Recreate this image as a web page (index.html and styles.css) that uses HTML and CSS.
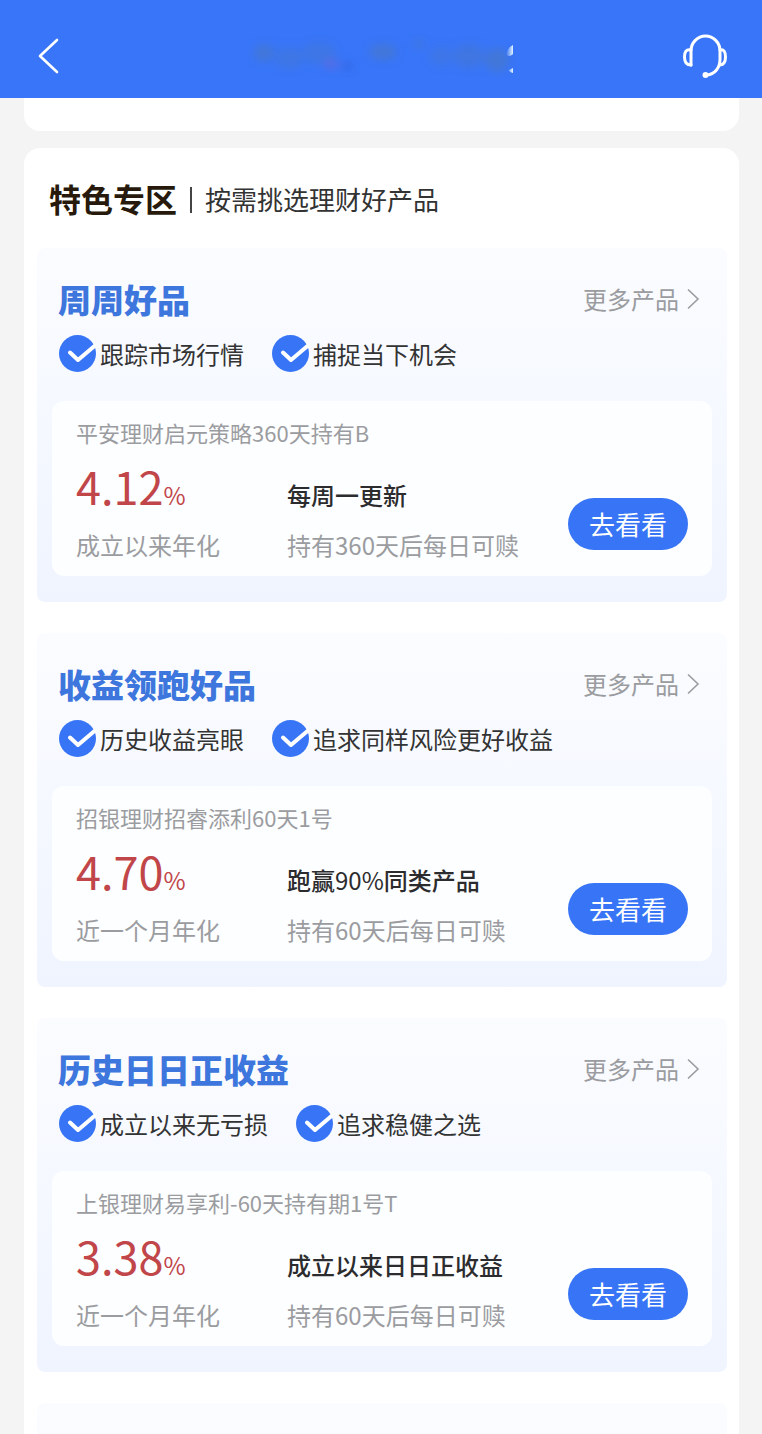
FILE: index.html
```html
<!DOCTYPE html>
<html lang="zh-CN">
<head>
    <meta charset="utf-8">
    <meta name="viewport" content="width=device-width, initial-scale=1">
    <title>特色专区</title>
    <link rel="stylesheet" href="styles.css">
</head>
<body>
    <!-- Shared icons -->
    <svg class="sprite" aria-hidden="true">
        <symbol id="check" viewBox="0 0 37 37">
            <circle cx="18.5" cy="18.5" r="18.5" fill="#3875f6"/>
            <path d="M11 17.500L19 25L35.500 11" fill="none" stroke="#fff" stroke-width="4" stroke-linecap="round" stroke-linejoin="round"/>
        </symbol>
        <symbol id="more" viewBox="0 0 14 22">
            <path d="M2 1.500L12 11L2 20.500" fill="none" stroke="#9b9c9f" stroke-width="1.600"/>
        </symbol>
    </svg>

    <!-- Top bar -->
    <header class="topbar">
        <button class="icon-btn" type="button" aria-label="返回">
            <svg width="24" height="38" viewBox="0 0 24 38">
                <path d="M21 3L4 19L21 35" fill="none" stroke="#fff" stroke-width="2.600" stroke-linecap="round" stroke-linejoin="round"/>
            </svg>
        </button>
        <svg class="smudge" width="270" height="44" viewBox="0 0 270 44" aria-hidden="true">
            <defs>
                <filter id="soft" x="-20%" y="-40%" width="140%" height="180%"><feGaussianBlur stdDeviation="4"/></filter>
                <linearGradient id="fade"><stop offset="0" stop-color="#d5ecff" stop-opacity="0"/><stop offset="1" stop-color="#e4f6ff"/></linearGradient>
            </defs>
            <g filter="url(#soft)" fill="#4a78c4" opacity="0.6">
                <ellipse cx="17" cy="19" rx="10" ry="9"/>
                <ellipse cx="42" cy="24" rx="14" ry="11" opacity="0.6"/>
                <ellipse cx="72" cy="19" rx="17" ry="11" opacity="0.6"/>
                <ellipse cx="84" cy="30" rx="8" ry="5" fill="#6a68d8"/>
                <ellipse cx="100" cy="32" rx="6" ry="4" fill="#2f5ed8"/>
                <ellipse cx="136" cy="18" rx="14" ry="8"/>
                <ellipse cx="172" cy="10" rx="5" ry="4"/>
                <ellipse cx="194" cy="22" rx="12" ry="10" opacity="0.5"/>
                <ellipse cx="222" cy="22" rx="16" ry="12" opacity="0.7"/>
                <ellipse cx="250" cy="26" rx="12" ry="12"/>
            </g>
            <path d="M266 11V20Q262 24 259 20Q261 13 266 11ZM266 34V39Q262 38 262 36Z" fill="url(#fade)"/>
        </svg>
        <button class="icon-btn" type="button" aria-label="客服">
            <svg width="46" height="46" viewBox="0 0 46 46" fill="none" stroke="#fff" stroke-width="3" stroke-linecap="round" stroke-linejoin="round">
                <path d="M9 32V18A14.500 15 0 0 1 38 18V26C38 35 33 41 25 42"/>
                <path d="M9 17C4 16 2.500 19 2.500 24S4 32 9 32"/>
                <path d="M38 17C42 16 43.500 19 43.500 24S42 32 37.500 32"/>
                <circle cx="23.500" cy="42" r="1.500"/>
            </svg>
        </button>
    </header>

    <main class="content">
        <div class="card card-end"></div>

        <section class="card zone">
            <div class="zone-head">
                <h1>特色专区</h1>
                <span class="bar"></span>
                <p>按需挑选理财好产品</p>
            </div>

            <article class="panel">
                <div class="panel-head">
                    <h2>周周好品</h2>
                    <a class="more" href="#">更多产品<svg><use href="#more"/></svg></a>
                </div>
                <ul class="tags">
                    <li><svg><use href="#check"/></svg>跟踪市场行情</li>
                    <li><svg><use href="#check"/></svg>捕捉当下机会</li>
                </ul>
                <div class="product">
                    <h3>平安理财启元策略360天持有B</h3>
                    <div class="product-row">
                        <div class="rate">
                            <p class="num">4.12<small>%</small></p>
                            <p class="note">成立以来年化</p>
                        </div>
                        <div class="info">
                            <p class="point">每周一更新</p>
                            <p class="note">持有360天后每日可赎</p>
                        </div>
                        <button class="go" type="button">去看看</button>
                    </div>
                </div>
            </article>

            <article class="panel">
                <div class="panel-head">
                    <h2>收益领跑好品</h2>
                    <a class="more" href="#">更多产品<svg><use href="#more"/></svg></a>
                </div>
                <ul class="tags">
                    <li><svg><use href="#check"/></svg>历史收益亮眼</li>
                    <li><svg><use href="#check"/></svg>追求同样风险更好收益</li>
                </ul>
                <div class="product">
                    <h3>招银理财招睿添利60天1号</h3>
                    <div class="product-row">
                        <div class="rate">
                            <p class="num">4.70<small>%</small></p>
                            <p class="note">近一个月年化</p>
                        </div>
                        <div class="info">
                            <p class="point">跑赢<span>90%</span>同类产品</p>
                            <p class="note">持有60天后每日可赎</p>
                        </div>
                        <button class="go" type="button">去看看</button>
                    </div>
                </div>
            </article>

            <article class="panel">
                <div class="panel-head">
                    <h2>历史日日正收益</h2>
                    <a class="more" href="#">更多产品<svg><use href="#more"/></svg></a>
                </div>
                <ul class="tags">
                    <li><svg><use href="#check"/></svg>成立以来无亏损</li>
                    <li><svg><use href="#check"/></svg>追求稳健之选</li>
                </ul>
                <div class="product">
                    <h3>上银理财易享利-60天持有期1号T</h3>
                    <div class="product-row">
                        <div class="rate">
                            <p class="num">3.38<small>%</small></p>
                            <p class="note">近一个月年化</p>
                        </div>
                        <div class="info">
                            <p class="point">成立以来日日正收益</p>
                            <p class="note">持有60天后每日可赎</p>
                        </div>
                        <button class="go" type="button">去看看</button>
                    </div>
                </div>
            </article>

            <article class="panel panel-next"></article>
        </section>
    </main>
</body>
</html>
```

FILE: styles.css
```css
* {
    box-sizing: border-box;
    margin: 0;
    padding: 0;
}
body {
    display: flex;
    flex-direction: column;
    height: 100vh;
    overflow: hidden;
    background: #f4f4f4;
    color: #333;
    font-family: "Noto Sans CJK SC", sans-serif;
}
button {
    border: 0;
    font-family: inherit;
    cursor: pointer;
}
.sprite {
    position: absolute;
    width: 0;
    height: 0;
}

/* Top bar */
.topbar {
    display: flex;
    flex: none;
    align-items: center;
    justify-content: space-between;
    height: 98px;
    padding: 14px 34px 0 36px;
    background: #3875f8;
}
.icon-btn {
    display: flex;
    width: 46px;
    background: none;
}

/* Scrolling content */
.content {
    flex: 1;
    min-height: 0;
    padding: 0 23px 0 24px;
    overflow-y: auto;
    scrollbar-width: none;
}
.card {
    background: #fff;
    border-radius: 16px;
}
.card-end {
    height: 33px;
    margin-bottom: 17px;
    border-radius: 0 0 16px 16px;
}
.zone {
    padding: 0 12px 12px 13px;
}
.zone-head {
    display: flex;
    align-items: center;
    height: 100px;
    padding-left: 12px;
}
.zone-head h1 {
    color: #271a0c;
    font-size: 32px;
    font-weight: 700;
    line-height: 40px;
}
.zone-head .bar {
    width: 2px;
    height: 26px;
    margin: 4px 13px 0;
    background: #444;
}
.zone-head p {
    padding-top: 2px;
    font-size: 26px;
    line-height: 36px;
}

/* Product groups */
.panel {
    margin-bottom: 31px;
    padding: 32px 15px 26px;
    border-radius: 8px;
    background: linear-gradient(#fbfcff, #f6f9ff 40%, #eff4ff);
}
.panel-next {
    height: 354px;
    margin-bottom: 0;
}
.panel-head {
    display: flex;
    align-items: center;
    justify-content: space-between;
    height: 38px;
    padding: 0 12px 0 6px;
}
.panel-head h2 {
    color: #3d76dc;
    font-size: 33px;
    font-weight: 900;
    line-height: 38px;
}
.more {
    display: flex;
    align-items: center;
    gap: 7px;
    color: #9b9c9f;
    font-size: 24px;
    line-height: 36px;
    text-decoration: none;
}
.more svg {
    width: 14px;
    height: 22px;
}
.tags {
    display: flex;
    gap: 28px;
    margin: 17px 0 29px 7px;
    list-style: none;
}
.tags li {
    display: flex;
    align-items: center;
    gap: 4px;
    font-size: 24px;
    line-height: 37px;
}
.tags svg {
    width: 37px;
    height: 37px;
}

.product {
    padding: 16px 24px;
    border-radius: 12px;
    background: #fdfeff;
}
.product h3 {
    color: #9b9c9f;
    font-size: 22px;
    font-weight: 400;
    line-height: 30px;
}
.product-row {
    display: flex;
    align-items: flex-end;
    margin-top: 15px;
}
.rate {
    width: 211px;
}
.num {
    margin-bottom: -6px;
    color: #c1464a;
    font-size: 45px;
    line-height: 48px;
}
.num small {
    font-size: 24px;
}
.point {
    color: #2c2c2e;
    font-size: 24px;
    font-weight: 500;
    line-height: 36px;
}
.point span {
    font-weight: 400;
}
.note {
    margin-top: 17px;
    color: #9b9c9f;
    font-size: 24px;
    line-height: 30px;
}
.go {
    width: 120px;
    height: 52px;
    margin: 0 0 10px auto;
    border-radius: 26px;
    background: #3875f6;
    color: #fff;
    font-size: 26px;
    line-height: 52px;
}
```
